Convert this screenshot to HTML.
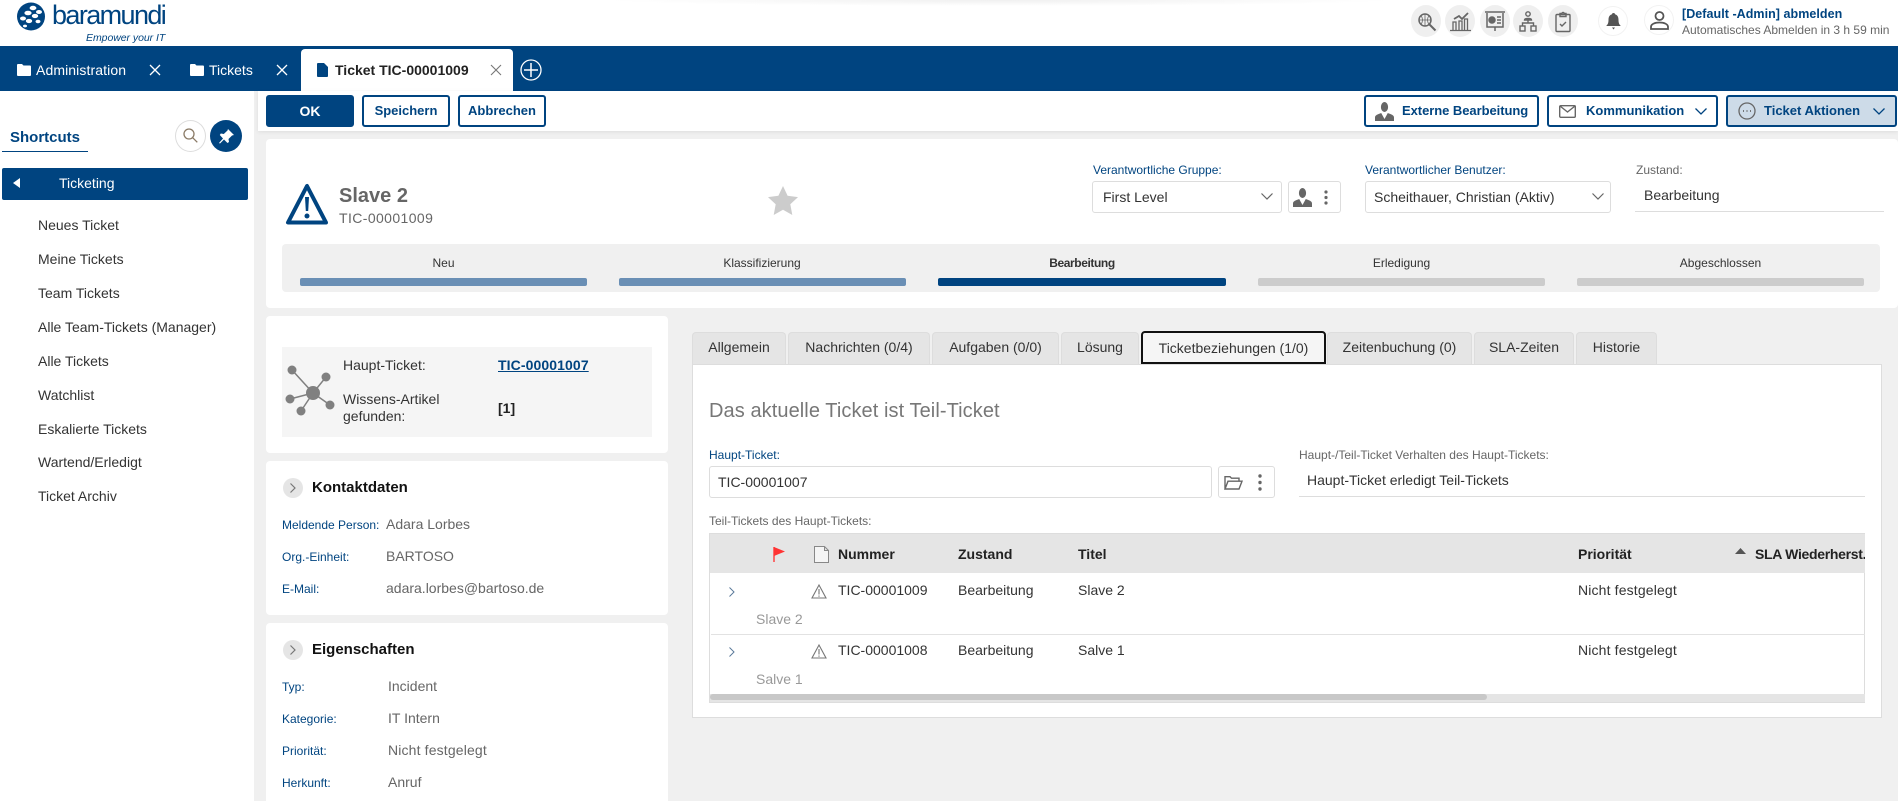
<!DOCTYPE html>
<html lang="de"><head><meta charset="utf-8"><title>Ticket TIC-00001009</title>
<style>
html,body{margin:0;padding:0}
body{width:1898px;height:801px;overflow:hidden;position:relative;background:#f0f0f0;font-family:"Liberation Sans",sans-serif;color:#222;font-size:14px}
.b{position:absolute;box-sizing:border-box}
.t{position:absolute;white-space:nowrap;line-height:16px;height:16px;margin-top:-8px}
.n{color:#004480}.g{color:#666}
.l{font-size:12px;color:#004480}
.h{font-weight:700}
.btn{position:absolute;top:95px;height:32px;box-sizing:border-box;border:2px solid #004480;border-radius:3px;background:#fff;color:#004480;font-weight:700;font-size:13px;line-height:28px;text-align:center}
.bt{position:absolute;top:111px;margin-top:-8px;line-height:16px;height:16px;white-space:nowrap;color:#004480;font-weight:700;font-size:13px}
.tab{position:absolute;top:332px;height:32px;box-sizing:border-box;background:#e5e5e5;border:1px solid #ddd;border-bottom:none;border-radius:4px 4px 0 0;text-align:center;line-height:28px;font-size:14px;color:#333}
.ic{position:absolute;border-radius:50%;background:#efefef;width:30px;height:32px;top:5px}
.bar{position:absolute;top:278px;height:8px;border-radius:2px}
.in{position:absolute;box-sizing:border-box;background:#fff;border:1px solid #ddd;border-radius:3px}
svg{position:absolute;overflow:visible}
</style></head><body>

<!-- top header -->
<div class="b" style="left:0;top:0;width:1898px;height:46px;background:#fff"></div>
<div class="b" style="left:600px;top:0;width:800px;height:6px;background:radial-gradient(ellipse at 50% 0,#f0f0f0,#fff 70%)"></div>
<svg style="left:17px;top:2px" width="28" height="29" viewBox="0 0 28 29"><circle cx="14" cy="14.5" r="14" fill="#004480"/><g fill="#fff"><ellipse cx="16" cy="6" rx="3.400" ry="2.200"/><ellipse cx="22" cy="10" rx="3" ry="2"/><ellipse cx="11" cy="11" rx="3.600" ry="2.300"/><ellipse cx="18" cy="14" rx="3.200" ry="2.100"/><ellipse cx="6" cy="16.500" rx="3" ry="2"/><ellipse cx="12" cy="19" rx="3.200" ry="2.100"/><ellipse cx="21" cy="19.500" rx="2.500" ry="1.700"/><ellipse cx="8" cy="24" rx="2" ry="1.400"/></g></svg>
<span class="t" style="left:52px;top:15px;font-size:27px;color:#004480;line-height:30px;height:30px;margin-top:-15px;letter-spacing:-1.600px">baramundi</span>
<span class="t" style="left:86px;top:38px;font-size:10.500px;font-style:italic;color:#004480;letter-spacing:-.05px">Empower your IT</span>

<div class="ic" style="left:1411px"></div><div class="ic" style="left:1445px"></div><div class="ic" style="left:1480px"></div><div class="ic" style="left:1513px"></div><div class="ic" style="left:1548px"></div>
<svg style="left:1417px;top:12px" width="20" height="20" viewBox="0 0 20 20" fill="none" stroke="#666" stroke-width="1.500"><circle cx="8" cy="8" r="6"/><path d="M1.500 8h13M8 2v12M4 3.500c2 3 2 6 0 9M12 3.500c-2 3-2 6 0 9" stroke-width=".8"/><path d="M12.500 12.500l6 6" stroke-width="2"/></svg>
<svg style="left:1450px;top:11px" width="21" height="20" viewBox="0 0 21 20" fill="none" stroke="#666" stroke-width="1.300"><path d="M4 8l5-3 3 3 6-6" stroke-width="1.800"/><path d="M3 19v-8h3v8M9 19v-9h3v9M14.500 19v-11h3v11M0 19.500h21"/></svg>
<svg style="left:1485px;top:11px" width="20" height="22" viewBox="0 0 20 22" fill="none" stroke="#666" stroke-width="1.500"><path d="M0 1h20M2 2v14h16V2M10 16v4"/><circle cx="7" cy="9" r="3" fill="#666"/><path d="M12 6h4M12 9h4M12 12h4"/></svg>
<svg style="left:1519px;top:11px" width="18" height="21" viewBox="0 0 18 21" fill="none" stroke="#666" stroke-width="1.400"><circle cx="9" cy="3" r="2.200"/><path d="M5.500 9c0-2 7-2 7 0zM9 9v3M3.500 15v-3h11v3"/><rect x="1" y="15" width="5" height="5"/><rect x="12" y="15" width="5" height="5"/></svg>
<svg style="left:1555px;top:11px" width="16" height="21" viewBox="0 0 16 21" fill="none" stroke="#666" stroke-width="1.400"><rect x="1" y="3.500" width="14" height="17" rx="1"/><path d="M5 5.500V2.500h2a1 1 0 012 0h2v3zM5 13l2 2 4-4"/></svg>
<div class="b" style="left:1598px;top:6px;width:30px;height:30px;border-radius:50%;border:1px solid #f2f2f2"></div>
<svg style="left:1606px;top:13px" width="15" height="17" viewBox="0 0 15 17" fill="#555"><path d="M7.500 0c1 0 1.500.6 1.500 1.300C11.500 2 12.500 4 12.500 7c0 3 .8 4.500 2.300 6H.2C1.700 11.500 2.500 10 2.500 7c0-3 1-5 3.500-5.700C6 .6 6.500 0 7.500 0zM6 14.500h3L7.500 16.500z"/></svg>
<div class="b" style="left:1644px;top:5px;width:30px;height:30px;border-radius:50%;border:1px solid #f2f2f2"></div>
<svg style="left:1650px;top:11px" width="19" height="19" viewBox="0 0 19 19" fill="none" stroke="#555" stroke-width="1.800"><circle cx="9.500" cy="5" r="4"/><path d="M1 18v-2c0-3 4-4.500 8.500-4.500S18 13 18 16v2z"/></svg>
<span class="t n h" style="left:1682px;top:14px;font-size:12.500px;letter-spacing:.05px">[Default -Admin] abmelden</span>
<span class="t g" style="left:1682px;top:30px;font-size:12px">Automatisches Abmelden in 3 h 59 min</span>

<!-- tab bar -->
<div class="b" style="left:0;top:46px;width:1898px;height:45px;background:#004480"></div>
<svg style="left:17px;top:64px" width="14" height="12" viewBox="0 0 14 12" fill="#fff"><path d="M0 1a1 1 0 011-1h4l1.500 1.500H13a1 1 0 011 1V11a1 1 0 01-1 1H1a1 1 0 01-1-1z"/></svg>
<span class="t" style="left:36px;top:70px;color:#fff;letter-spacing:.1px">Administration</span>
<svg style="left:150px;top:65px" width="10" height="10" viewBox="0 0 10 10" stroke="#fff" stroke-width="1.300"><path d="M0 0l10 10M10 0L0 10"/></svg>
<svg style="left:190px;top:64px" width="14" height="12" viewBox="0 0 14 12" fill="#fff"><path d="M0 1a1 1 0 011-1h4l1.500 1.500H13a1 1 0 011 1V11a1 1 0 01-1 1H1a1 1 0 01-1-1z"/></svg>
<span class="t" style="left:209px;top:70px;color:#fff">Tickets</span>
<svg style="left:277px;top:65px" width="10" height="10" viewBox="0 0 10 10" stroke="#fff" stroke-width="1.300"><path d="M0 0l10 10M10 0L0 10"/></svg>
<div class="b" style="left:301px;top:49px;width:212px;height:42px;background:#fff;border-radius:4px 4px 0 0"></div>
<svg style="left:317px;top:63px" width="11" height="14" viewBox="0 0 11 14" fill="#004480"><path d="M1 0h6l4 4v9a1 1 0 01-1 1H1a1 1 0 01-1-1V1a1 1 0 011-1z"/></svg>
<span class="t h" style="left:335px;top:70px;color:#222">Ticket TIC-00001009</span>
<svg style="left:491px;top:65px" width="10" height="10" viewBox="0 0 10 10" stroke="#777" stroke-width="1.100"><path d="M0 0l10 10M10 0L0 10"/></svg>
<svg style="left:520px;top:59px" width="22" height="22" viewBox="0 0 22 22" fill="none" stroke="#fff" stroke-width="1.300"><circle cx="11" cy="11" r="10"/><path d="M11 4v14M4 11h14" stroke-width="1.500"/></svg>

<!-- sidebar -->
<div class="b" style="left:0;top:91px;width:254px;height:710px;background:#fff"></div>
<span class="t n h" style="left:10px;top:138px;font-size:15px">Shortcuts</span>
<div class="b" style="left:2px;top:151px;width:86px;height:1px;background:#004480"></div>
<div class="b" style="left:175px;top:120px;width:31px;height:32px;border-radius:50%;border:1px solid #ddd"></div>
<svg style="left:183px;top:128px" width="15" height="15" viewBox="0 0 15 15" fill="none" stroke="#8a7a66" stroke-width="1.300"><circle cx="6" cy="6" r="5"/><path d="M9.800 9.800l4.500 4.500"/></svg>
<div class="b" style="left:210px;top:120px;width:32px;height:32px;border-radius:50%;background:#004480"></div>
<svg style="left:219px;top:129px" width="15" height="15" viewBox="0 0 15 15" fill="#fff"><path d="M9 0l6 6-2 .5-3.500 3.500.5 3-1.500 1L5 10.500 1 14.500 0 14 4 9.500 .8 6l1-1.500 3 .5L8.500 1.500z"/></svg>
<div class="b" style="left:2px;top:168px;width:246px;height:32px;background:#004480;border-radius:2px"></div>
<svg style="left:13px;top:178px" width="7" height="10" viewBox="0 0 7 10" fill="#fff"><path d="M7 0v10L0 5z"/></svg>
<span class="t" style="left:59px;top:183px;color:#fff">Ticketing</span>
<span class="t" style="left:38px;top:225px;color:#333">Neues Ticket</span>
<span class="t" style="left:38px;top:259px;color:#333">Meine Tickets</span>
<span class="t" style="left:38px;top:293px;color:#333">Team Tickets</span>
<span class="t" style="left:38px;top:327px;color:#333">Alle Team-Tickets (Manager)</span>
<span class="t" style="left:38px;top:361px;color:#333">Alle Tickets</span>
<span class="t" style="left:38px;top:395px;color:#333">Watchlist</span>
<span class="t" style="left:38px;top:429px;color:#333">Eskalierte Tickets</span>
<span class="t" style="left:38px;top:462px;color:#333">Wartend/Erledigt</span>
<span class="t" style="left:38px;top:496px;color:#333">Ticket Archiv</span>

<!-- toolbar -->
<div class="b" style="left:258px;top:91px;width:1640px;height:40px;background:#fff;box-shadow:0 1px 4px rgba(0,0,0,.08)"></div>
<div class="btn" style="left:266px;width:88px;background:#004480;color:#fff;font-size:14px">OK</div>
<div class="btn" style="left:362px;width:88px">Speichern</div>
<div class="btn" style="left:458px;width:88px">Abbrechen</div>
<div class="btn" style="left:1364px;width:175px"></div>
<span class="bt" style="left:1402px;letter-spacing:-.05px">Externe Bearbeitung</span>
<svg style="left:1375px;top:102px" width="19" height="19" viewBox="0 0 19 19" fill="#666"><ellipse cx="9.500" cy="5" rx="3.600" ry="5"/><path d="M0 19v-3.500c0-2.500 3-3.200 6.200-4.500l3.300 6 3.300-6c3.200 1.300 6.200 2 6.200 4.500V19z"/></svg>
<div class="btn" style="left:1547px;width:171px"></div>
<span class="bt" style="left:1586px">Kommunikation</span>
<svg style="left:1559px;top:105px" width="17" height="13" viewBox="0 0 17 13" fill="none" stroke="#666" stroke-width="1.400"><rect x=".7" y=".7" width="15.600" height="11.600" rx="1"/><path d="M1 1l7.500 6L16 1"/></svg>
<svg style="left:1695px;top:108px" width="12" height="7" viewBox="0 0 12 7" fill="none" stroke="#004480" stroke-width="1.300"><path d="M.5.500L6 6 11.500.500"/></svg>
<div class="btn" style="left:1726px;width:171px;background:#cddbe8"></div>
<span class="bt" style="left:1764px">Ticket Aktionen</span>
<svg style="left:1738px;top:102px" width="18" height="18" viewBox="0 0 18 18" fill="none" stroke="#666" stroke-width="1.300"><circle cx="9" cy="9" r="8"/><path d="M5 9h1M8.500 9h1M12 9h1" stroke-width="1.800"/></svg>
<svg style="left:1873px;top:108px" width="12" height="7" viewBox="0 0 12 7" fill="none" stroke="#004480" stroke-width="1.300"><path d="M.5.500L6 6 11.500.500"/></svg>

<!-- ticket header card -->
<div class="b" style="left:266px;top:139px;width:1632px;height:169px;background:#fff;border-radius:4px"></div>
<svg style="left:286px;top:183px" width="42" height="42" viewBox="0 0 42 42" fill="none"><path d="M21 3L2 39.500h38z" stroke="#004480" stroke-width="4" stroke-linejoin="round"/><path d="M19 14h4l-.8 14h-2.400z" fill="#004480"/><circle cx="21" cy="33" r="2.500" fill="#004480"/></svg>
<span class="t h g" style="left:339px;top:196px;font-size:20px;line-height:24px;height:24px;margin-top:-12px">Slave 2</span>
<span class="t g" style="left:339px;top:218px;font-size:14px;letter-spacing:.4px">TIC-00001009</span>
<svg style="left:768px;top:186px" width="30" height="29" viewBox="0 0 30 29" fill="#ccc"><path d="M15 0l4.600 9.800L30 11.100l-7.700 7.200L24.300 29 15 23.700 5.700 29l2-10.700L0 11.100l10.400-1.300z"/></svg>

<span class="t l" style="left:1093px;top:170px">Verantwortliche Gruppe:</span>
<div class="in" style="left:1092px;top:181px;width:190px;height:32px"></div>
<span class="t" style="left:1103px;top:197px;color:#333">First Level</span>
<svg style="left:1261px;top:193px" width="12" height="7" viewBox="0 0 12 7" fill="none" stroke="#666" stroke-width="1.200"><path d="M.5.500L6 6 11.500.500"/></svg>
<div class="in" style="left:1288px;top:181px;width:53px;height:32px"></div>
<svg style="left:1293px;top:188px" width="19" height="19" viewBox="0 0 19 19" fill="#666"><ellipse cx="9.500" cy="5" rx="3.600" ry="5"/><path d="M0 19v-3.500c0-2.500 3-3.200 6.200-4.500l3.300 6 3.300-6c3.200 1.300 6.200 2 6.200 4.500V19z"/></svg>
<svg style="left:1324px;top:190px" width="4" height="15" viewBox="0 0 4 15" fill="#666"><circle cx="2" cy="2" r="1.600"/><circle cx="2" cy="7.500" r="1.600"/><circle cx="2" cy="13" r="1.600"/></svg>
<span class="t l" style="left:1365px;top:170px">Verantwortlicher Benutzer:</span>
<div class="in" style="left:1365px;top:181px;width:246px;height:32px"></div>
<span class="t" style="left:1374px;top:197px;color:#333">Scheithauer, Christian (Aktiv)</span>
<svg style="left:1592px;top:193px" width="12" height="7" viewBox="0 0 12 7" fill="none" stroke="#666" stroke-width="1.200"><path d="M.5.500L6 6 11.500.500"/></svg>
<span class="t g" style="left:1636px;top:170px;font-size:12px">Zustand:</span>
<span class="t" style="left:1644px;top:195px;color:#333">Bearbeitung</span>
<div class="b" style="left:1635px;top:211px;width:249px;height:1px;background:#ddd"></div>

<div class="b" style="left:282px;top:244px;width:1598px;height:48px;background:#f0f0f0;border-radius:4px"></div>
<span class="t" style="left:300px;width:287px;text-align:center;top:263px;font-size:12px;color:#333">Neu</span>
<span class="t" style="left:619px;width:286px;text-align:center;top:263px;font-size:12px;color:#333">Klassifizierung</span>
<span class="t h" style="left:938px;width:288px;text-align:center;top:263px;font-size:12px;color:#333;letter-spacing:-.4px">Bearbeitung</span>
<span class="t" style="left:1258px;width:287px;text-align:center;top:263px;font-size:12px;color:#333">Erledigung</span>
<span class="t" style="left:1577px;width:287px;text-align:center;top:263px;font-size:12px;color:#333">Abgeschlossen</span>
<div class="bar" style="left:300px;width:287px;background:#6a8fb5"></div>
<div class="bar" style="left:619px;width:287px;background:#6a8fb5"></div>
<div class="bar" style="left:938px;width:288px;background:#004480"></div>
<div class="bar" style="left:1258px;width:287px;background:#ccc"></div>
<div class="bar" style="left:1577px;width:287px;background:#ccc"></div>

<!-- left cards -->
<div class="b" style="left:266px;top:316px;width:402px;height:137px;background:#fff;border-radius:4px"></div>
<div class="b" style="left:282px;top:347px;width:370px;height:90px;background:#f5f5f5"></div>
<svg style="left:275px;top:345px" width="100" height="100" viewBox="0 0 100 100" fill="#808080" stroke="#808080"><path d="M38 48L17 25M38 48L51 32M38 48L15 54M38 48L26 66M38 48L55 60" stroke-width="1.500"/><g stroke="none"><circle cx="38" cy="48" r="7"/><circle cx="17" cy="25" r="4.500"/><circle cx="51" cy="32" r="4.500"/><circle cx="15" cy="54" r="4.500"/><circle cx="26" cy="66" r="4.500"/><circle cx="55" cy="60" r="4.500"/></g></svg>
<span class="t" style="left:343px;top:365px;color:#333">Haupt-Ticket:</span>
<span class="t n h" style="left:498px;top:365px;text-decoration:underline;letter-spacing:.1px">TIC-00001007</span>
<span class="t" style="left:343px;top:399px;color:#333">Wissens-Artikel</span>
<span class="t" style="left:343px;top:416px;color:#333">gefunden:</span>
<span class="t h" style="left:498px;top:408px;color:#222">[1]</span>

<div class="b" style="left:266px;top:461px;width:402px;height:154px;background:#fff;border-radius:4px"></div>
<div class="b" style="left:283px;top:478px;width:20px;height:20px;border-radius:50%;background:#e5e5e5"></div>
<svg style="left:290px;top:483px" width="6" height="10" viewBox="0 0 6 10" fill="none" stroke="#777" stroke-width="1.200"><path d="M.5.500L5 5 .5 9.500"/></svg>
<span class="t h" style="left:312px;top:488px;font-size:15px;color:#111">Kontaktdaten</span>
<span class="t l" style="left:282px;top:525px">Meldende Person:</span>
<span class="t g" style="left:386px;top:524px">Adara Lorbes</span>
<span class="t l" style="left:282px;top:557px">Org.-Einheit:</span>
<span class="t g" style="left:386px;top:556px">BARTOSO</span>
<span class="t l" style="left:282px;top:589px">E-Mail:</span>
<span class="t g" style="left:386px;top:588px">adara.lorbes@bartoso.de</span>

<div class="b" style="left:266px;top:623px;width:402px;height:178px;background:#fff;border-radius:4px 4px 0 0"></div>
<div class="b" style="left:283px;top:640px;width:20px;height:20px;border-radius:50%;background:#e5e5e5"></div>
<svg style="left:290px;top:645px" width="6" height="10" viewBox="0 0 6 10" fill="none" stroke="#777" stroke-width="1.200"><path d="M.5.500L5 5 .5 9.500"/></svg>
<span class="t h" style="left:312px;top:650px;font-size:15px;color:#111">Eigenschaften</span>
<span class="t l" style="left:282px;top:687px">Typ:</span>
<span class="t g" style="left:388px;top:686px">Incident</span>
<span class="t l" style="left:282px;top:719px">Kategorie:</span>
<span class="t g" style="left:388px;top:718px">IT Intern</span>
<span class="t l" style="left:282px;top:751px">Priorität:</span>
<span class="t g" style="left:388px;top:750px;letter-spacing:.15px">Nicht festgelegt</span>
<span class="t l" style="left:282px;top:783px">Herkunft:</span>
<span class="t g" style="left:388px;top:782px">Anruf</span>

<!-- tabs -->
<div class="b" style="left:692px;top:364px;width:1190px;height:354px;background:#fff;border:1px solid #ddd"></div>
<div class="tab" style="left:692px;width:94px">Allgemein</div>
<div class="tab" style="left:788px;width:142px">Nachrichten (0/4)</div>
<div class="tab" style="left:932px;width:127px">Aufgaben (0/0)</div>
<div class="tab" style="left:1061px;width:78px">Lösung</div>
<div class="tab" style="left:1141px;top:331px;height:33px;width:185px;background:#f5f5f5;border:2px solid #111;line-height:30px;color:#333">Ticketbeziehungen (1/0)</div>
<div class="tab" style="left:1327px;width:145px">Zeitenbuchung (0)</div>
<div class="tab" style="left:1474px;width:100px">SLA-Zeiten</div>
<div class="tab" style="left:1576px;width:81px">Historie</div>

<span class="t" style="left:709px;top:411px;font-size:20px;line-height:24px;height:24px;margin-top:-12px;color:#777;letter-spacing:.08px">Das aktuelle Ticket ist Teil-Ticket</span>
<span class="t l" style="left:709px;top:455px">Haupt-Ticket:</span>
<div class="in" style="left:709px;top:466px;width:503px;height:32px"></div>
<span class="t" style="left:718px;top:482px;color:#333">TIC-00001007</span>
<div class="in" style="left:1218px;top:466px;width:57px;height:32px"></div>
<svg style="left:1224px;top:475px" width="19" height="15" viewBox="0 0 19 15" fill="none" stroke="#666" stroke-width="1.400"><path d="M1 14V1.700h5l1.500 1.500H15v3M1 14l3-7.800h14L15 14z"/></svg>
<svg style="left:1258px;top:474px" width="4" height="17" viewBox="0 0 4 17" fill="#666"><circle cx="2" cy="2" r="1.700"/><circle cx="2" cy="8.500" r="1.700"/><circle cx="2" cy="15" r="1.700"/></svg>
<span class="t g" style="left:1299px;top:455px;font-size:12px">Haupt-/Teil-Ticket Verhalten des Haupt-Tickets:</span>
<span class="t" style="left:1307px;top:480px;color:#333">Haupt-Ticket erledigt Teil-Tickets</span>
<div class="b" style="left:1299px;top:496px;width:566px;height:1px;background:#ddd"></div>
<span class="t g" style="left:709px;top:521px;font-size:12px">Teil-Tickets des Haupt-Tickets:</span>

<!-- table -->
<div class="b" style="left:709px;top:533px;width:1156px;height:170px;border:1px solid #ddd;background:#fff"></div>
<div class="b" style="left:710px;top:534px;width:1155px;height:39px;background:#e5e5e5"></div>
<svg style="left:773px;top:547px" width="12" height="15" viewBox="0 0 12 15"><path d="M1 0v15" stroke="#f44" stroke-width="1.500"/><path d="M1 0l11 4.500L1 9z" fill="#f33"/></svg>
<svg style="left:814px;top:546px" width="15" height="17" viewBox="0 0 15 17" fill="#f5f5f5" stroke="#888" stroke-width="1"><path d="M.5.500h10l4 4v12H.5zM10.500.500v4h4"/></svg>
<span class="t h" style="left:838px;top:554px;color:#222">Nummer</span>
<span class="t h" style="left:958px;top:554px;color:#222">Zustand</span>
<span class="t h" style="left:1078px;top:554px;color:#222">Titel</span>
<span class="t h" style="left:1578px;top:554px;color:#222">Priorität</span>
<svg style="left:1735px;top:548px" width="11" height="6" viewBox="0 0 11 6" fill="#555"><path d="M5.500 0L11 6H0z"/></svg>
<div class="b" style="left:1755px;top:544px;width:110px;height:20px;overflow:hidden"><span class="t h" style="left:0;top:10px;color:#222;letter-spacing:-.3px">SLA Wiederherst.</span></div>

<svg style="left:729px;top:587px" width="6" height="10" viewBox="0 0 6 10" fill="none" stroke="#5a7a9a" stroke-width="1"><path d="M.5.500L5 5 .5 9.500"/></svg>
<svg style="left:811px;top:584px" width="16" height="15" viewBox="0 0 16 15" fill="none" stroke="#777" stroke-width="1.100"><path d="M8 1L1 14h14zM8 5v5.500M8 11.500v1.300"/></svg>
<span class="t" style="left:838px;top:590px;color:#333">TIC-00001009</span>
<span class="t" style="left:958px;top:590px;color:#333">Bearbeitung</span>
<span class="t" style="left:1078px;top:590px;color:#333">Slave 2</span>
<span class="t" style="left:1578px;top:590px;color:#333;letter-spacing:.15px">Nicht festgelegt</span>
<span class="t" style="left:756px;top:619px;color:#999">Slave 2</span>
<div class="b" style="left:711px;top:634px;width:1154px;height:1px;background:#e2e2e2"></div>
<svg style="left:729px;top:647px" width="6" height="10" viewBox="0 0 6 10" fill="none" stroke="#5a7a9a" stroke-width="1"><path d="M.5.500L5 5 .5 9.500"/></svg>
<svg style="left:811px;top:644px" width="16" height="15" viewBox="0 0 16 15" fill="none" stroke="#777" stroke-width="1.100"><path d="M8 1L1 14h14zM8 5v5.500M8 11.500v1.300"/></svg>
<span class="t" style="left:838px;top:650px;color:#333">TIC-00001008</span>
<span class="t" style="left:958px;top:650px;color:#333">Bearbeitung</span>
<span class="t" style="left:1078px;top:650px;color:#333">Salve 1</span>
<span class="t" style="left:1578px;top:650px;color:#333;letter-spacing:.15px">Nicht festgelegt</span>
<span class="t" style="left:756px;top:679px;color:#999">Salve 1</span>
<div class="b" style="left:710px;top:694px;width:1155px;height:8px;background:#e5e5e5"></div>
<div class="b" style="left:710px;top:694px;width:777px;height:6px;background:#c8c8c8;border-radius:3px"></div>
</body></html>
